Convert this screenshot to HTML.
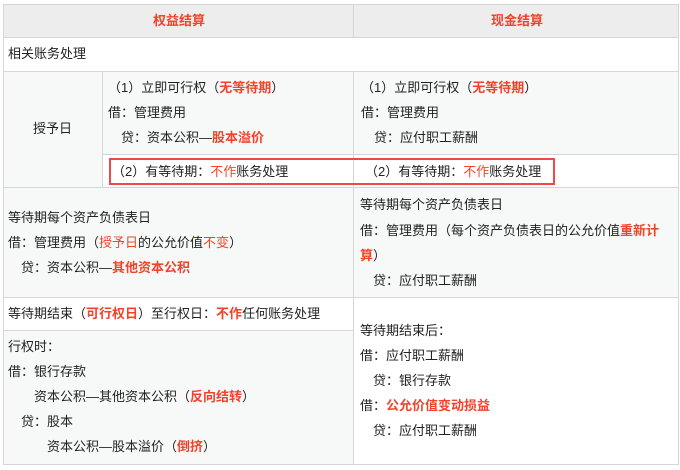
<!DOCTYPE html>
<html><head><meta charset="utf-8"><style>
body{margin:0;width:680px;height:470px;background:#fff;font-family:"Liberation Sans","Noto Sans CJK SC",sans-serif;font-size:13px;color:#222;position:relative;overflow:hidden}
.c{position:absolute;box-sizing:border-box;border:1px solid #d6d6d6}
.g{background:#f7f8f8}
.t{position:absolute;white-space:nowrap;line-height:16px}
.r{color:#f0432a}
b.r{font-weight:bold}
</style></head><body>
<div class="c" style="left:3px;top:4px;width:351px;height:34px;background:#ededed"></div>
<div class="c" style="left:353px;top:4px;width:326px;height:34px;background:#ededed"></div>
<div class="c" style="left:3px;top:37px;width:676px;height:35px"></div>
<div class="c g" style="left:3px;top:71px;width:100px;height:117px"></div>
<div class="c g" style="left:102px;top:71px;width:252px;height:84px"></div>
<div class="c g" style="left:353px;top:71px;width:326px;height:84px"></div>
<div class="c" style="left:102px;top:154px;width:252px;height:34px"></div>
<div class="c" style="left:353px;top:154px;width:326px;height:34px"></div>
<div class="c g" style="left:3px;top:187px;width:351px;height:111px"></div>
<div class="c g" style="left:353px;top:187px;width:326px;height:111px"></div>
<div class="c" style="left:3px;top:297px;width:351px;height:34px"></div>
<div class="c g" style="left:3px;top:330px;width:351px;height:135px"></div>
<div class="c" style="left:353px;top:297px;width:326px;height:168px"></div>
<div style="position:absolute;left:109px;top:158px;width:446px;height:27px;box-sizing:border-box;border:2px solid #ee4848"></div>

<div class="t" style="left:153px;top:13px"><b class="r">权益结算</b></div>
<div class="t" style="left:491px;top:13px"><b class="r">现金结算</b></div>
<div class="t" style="left:8px;top:46px">相关账务处理</div>
<div class="t" style="left:33px;top:121px">授予日</div>
<div class="t" style="left:108px;top:80px">（1）立即可行权（<b class="r">无等待期</b>）</div>
<div class="t" style="left:108px;top:105px">借：管理费用</div>
<div class="t" style="left:121px;top:130px">贷：资本公积—<b class="r">股本溢价</b></div>
<div class="t" style="left:361px;top:80px">（1）立即可行权（<b class="r">无等待期</b>）</div>
<div class="t" style="left:361px;top:105px">借：管理费用</div>
<div class="t" style="left:374px;top:130px">贷：应付职工薪酬</div>
<div class="t" style="left:112px;top:164px">（2）有等待期：<span class="r">不作</span>账务处理</div>
<div class="t" style="left:365px;top:164px">（2）有等待期：<span class="r">不作</span>账务处理</div>

<div class="t" style="left:8px;top:210px">等待期每个资产负债表日</div>
<div class="t" style="left:8px;top:235px">借：管理费用（<span class="r">授予日</span>的公允价值<span class="r">不变</span>）</div>
<div class="t" style="left:21px;top:260px">贷：资本公积—<b class="r">其他资本公积</b></div>
<div class="t" style="left:360px;top:197px">等待期每个资产负债表日</div>
<div class="t" style="left:360px;top:223px">借：管理费用（每个资产负债表日的公允价值<b class="r">重新计</b></div>
<div class="t" style="left:360px;top:248px"><b class="r">算</b>）</div>
<div class="t" style="left:373px;top:273px">贷：应付职工薪酬</div>

<div class="t" style="left:8px;top:306px">等待期结束（<b class="r">可行权日</b>）至行权日：<b class="r">不作</b>任何账务处理</div>
<div class="t" style="left:8px;top:339px">行权时：</div>
<div class="t" style="left:8px;top:364px">借：银行存款</div>
<div class="t" style="left:34px;top:389px">资本公积—其他资本公积（<b class="r">反向结转</b>）</div>
<div class="t" style="left:21px;top:414px">贷：股本</div>
<div class="t" style="left:47px;top:439px">资本公积—股本溢价（<b class="r">倒挤</b>）</div>
<div class="t" style="left:360px;top:323px">等待期结束后：</div>
<div class="t" style="left:360px;top:348px">借：应付职工薪酬</div>
<div class="t" style="left:373px;top:373px">贷：银行存款</div>
<div class="t" style="left:360px;top:398px">借：<b class="r">公允价值变动损益</b></div>
<div class="t" style="left:373px;top:423px">贷：应付职工薪酬</div>
</body></html>
